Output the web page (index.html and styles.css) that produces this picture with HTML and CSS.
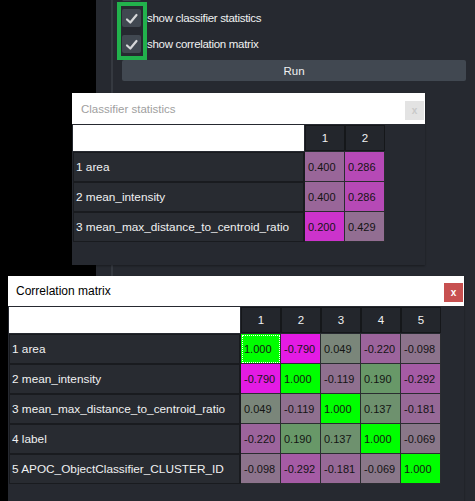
FILE: index.html
```html
<!DOCTYPE html>
<html lang="en">
<head>
<meta charset="utf-8">
<title>Classifier statistics</title>
<link rel="stylesheet" href="styles.css">
</head>
<body>
<div class="desktop">
  <div class="void"></div>
  <div class="panel">
    <div class="panel-inner">
      <div class="check-row ghost"><span class="cb"></span></div>
      <label class="check-row">
        <span class="cb"><svg viewBox="0 0 19 18" width="19" height="18"><path d="M5 10.5 L8.3 13.5 L14.5 6" fill="none" stroke="#d6d7d9" stroke-width="2.2" stroke-linecap="round" stroke-linejoin="round"/></svg></span>
        <span class="cb-label">show classifier statistics</span>
      </label>
      <label class="check-row">
        <span class="cb"><svg viewBox="0 0 19 18" width="19" height="18"><path d="M5 10.5 L8.3 13.5 L14.5 6" fill="none" stroke="#d6d7d9" stroke-width="2.2" stroke-linecap="round" stroke-linejoin="round"/></svg></span>
        <span class="cb-label">show correlation matrix</span>
      </label>
      <button class="run">Run</button>
    </div>
  </div>

  <div class="annot"></div>

  <section class="window win-stats">
    <header class="titlebar inactive">
      <span class="title">Classifier statistics</span>
      <span class="close">x</span>
    </header>
    <div class="table t2">
      <div class="corner"></div>
      <div class="colhead">1</div>
      <div class="colhead">2</div>

      <div class="rowhead">1 area</div>
      <div class="cell" style="background:#996699">0.400</div>
      <div class="cell" style="background:#b649b6">0.286</div>

      <div class="rowhead">2 mean_intensity</div>
      <div class="cell" style="background:#996699">0.400</div>
      <div class="cell" style="background:#b649b6">0.286</div>

      <div class="rowhead">3 mean_max_distance_to_centroid_ratio</div>
      <div class="cell" style="background:#cc33cc">0.200</div>
      <div class="cell" style="background:#926e92">0.429</div>
    </div>
  </section>

  <section class="window win-corr">
    <header class="titlebar">
      <span class="title">Correlation matrix</span>
      <span class="close red">x</span>
    </header>
    <div class="table t5">
      <div class="corner"></div>
      <div class="colhead">1</div>
      <div class="colhead">2</div>
      <div class="colhead">3</div>
      <div class="colhead">4</div>
      <div class="colhead">5</div>

      <div class="rowhead">1 area</div>
      <div class="cell focus" style="background:#00ff00">1.000</div>
      <div class="cell" style="background:#e41be4">-0.790</div>
      <div class="cell" style="background:#7a867a">0.049</div>
      <div class="cell" style="background:#9c649c">-0.220</div>
      <div class="cell" style="background:#8c738c">-0.098</div>

      <div class="rowhead">2 mean_intensity</div>
      <div class="cell" style="background:#e41be4">-0.790</div>
      <div class="cell" style="background:#00ff00">1.000</div>
      <div class="cell" style="background:#8f708f">-0.119</div>
      <div class="cell" style="background:#689868">0.190</div>
      <div class="cell" style="background:#a55ba5">-0.292</div>

      <div class="rowhead">3 mean_max_distance_to_centroid_ratio</div>
      <div class="cell" style="background:#7a867a">0.049</div>
      <div class="cell" style="background:#8f708f">-0.119</div>
      <div class="cell" style="background:#00ff00">1.000</div>
      <div class="cell" style="background:#6e916e">0.137</div>
      <div class="cell" style="background:#976997">-0.181</div>

      <div class="rowhead">4 label</div>
      <div class="cell" style="background:#9c649c">-0.220</div>
      <div class="cell" style="background:#689868">0.190</div>
      <div class="cell" style="background:#6e916e">0.137</div>
      <div class="cell" style="background:#00ff00">1.000</div>
      <div class="cell" style="background:#897789">-0.069</div>

      <div class="rowhead">5 APOC_ObjectClassifier_CLUSTER_ID</div>
      <div class="cell" style="background:#8c738c">-0.098</div>
      <div class="cell" style="background:#a55ba5">-0.292</div>
      <div class="cell" style="background:#976997">-0.181</div>
      <div class="cell" style="background:#897789">-0.069</div>
      <div class="cell" style="background:#00ff00">1.000</div>
    </div>
  </section>
</div>
</body>
</html>
```

FILE: styles.css
```css
* { box-sizing: border-box; }

html, body {
  margin: 0;
  padding: 0;
  background: #000;
}

body {
  font-family: "Liberation Sans", Arial, sans-serif;
  font-size: 11px;
  color: #f0f1f2;
}

.desktop {
  position: relative;
  width: 475px;
  height: 501px;
  overflow: hidden;
  display: flex;
  background: #000;
}

.void {
  width: 96px;
  flex: none;
}

.panel {
  flex: 1;
  background: #262930;
  display: flex;
}

.panel-inner {
  flex: 1;
  margin-left: 15px;
  border-left: 2px solid #353940;
  padding: 0 9px 0 9px;
  display: flex;
  flex-direction: column;
  gap: 8px;
}

.check-row {
  display: flex;
  align-items: center;
  gap: 6px;
  height: 18px;
  font-size: 11.5px;
  letter-spacing: -0.3px;
}

.check-row.ghost {
  margin-top: -17px;
}

.cb {
  width: 19px;
  height: 18px;
  flex: none;
  background: #414851;
  border-radius: 2px;
  display: flex;
}

.cb-label {
  color: #f0f1f2;
}

.run {
  margin-top: -1px;
  height: 21px;
  border: 0;
  border-radius: 2px;
  background: #414851;
  color: #f0f1f2;
  font-family: inherit;
  font-size: 11.5px;
  padding: 0;
}

.annot {
  position: absolute;
  left: 117px;
  top: 2px;
  width: 30px;
  height: 58px;
  border: 4px solid #22b14c;
}

.window {
  position: absolute;
  background: #262930;
  display: flex;
  flex-direction: column;
  box-shadow: 0 1px 2px rgba(0, 0, 0, 0.35);
}

.win-stats {
  left: 72px;
  top: 93px;
  width: 353px;
  height: 172px;
}

.win-corr {
  left: 8px;
  top: 276px;
  width: 456px;
  height: 240px;
}

.titlebar {
  flex: none;
  height: 30px;
  background: #fff;
  display: flex;
  align-items: center;
  justify-content: space-between;
  padding: 0 1px 0 8px;
}

.win-stats .titlebar {
  height: 31px;
  padding-left: 9px;
}

.title {
  font-size: 12px;
  color: #000;
}

.titlebar.inactive .title {
  color: #a0a0a0;
  font-size: 11.5px;
}

.close {
  width: 19px;
  height: 19px;
  margin-top: 3px;
  background: #e3e3e3;
  color: #c9c9c9;
  font-size: 10px;
  font-weight: bold;
  display: flex;
  align-items: center;
  justify-content: center;
}

.close.red {
  background: #c75050;
  color: #fff;
}

.table {
  display: grid;
  margin: 1px 0 0 1px;
  grid-template-rows: 27px;
  grid-auto-rows: 30px;
}

.t2 { grid-template-columns: 232px repeat(2, 40px); }
.t5 { grid-template-columns: 232px repeat(5, 40px); }

.corner {
  background: #fff;
  border-right: 1px solid #262930;
  border-bottom: 1px solid #262930;
}

.colhead {
  background: #23262c;
  border: 1px solid #15171a;
  margin: 0 0 1px 0;
  display: flex;
  align-items: center;
  justify-content: center;
  font-size: 11.5px;
  color: #f0f1f2;
}

.rowhead {
  background: #282b31;
  border: 1px solid #191b1f;
  border-right-width: 2px;
  display: flex;
  align-items: center;
  padding-left: 2px;
  white-space: nowrap;
  color: #f0f1f2;
  font-size: 11.8px;
}

.cell {
  border-right: 1px solid #2a2c30;
  border-bottom: 1px solid #2a2c30;
  display: flex;
  align-items: center;
  padding-left: 3px;
  color: #141414;
  font-size: 11px;
}

.cell.focus {
  outline: 1px dotted #ffffff;
  outline-offset: -2px;
}
```
